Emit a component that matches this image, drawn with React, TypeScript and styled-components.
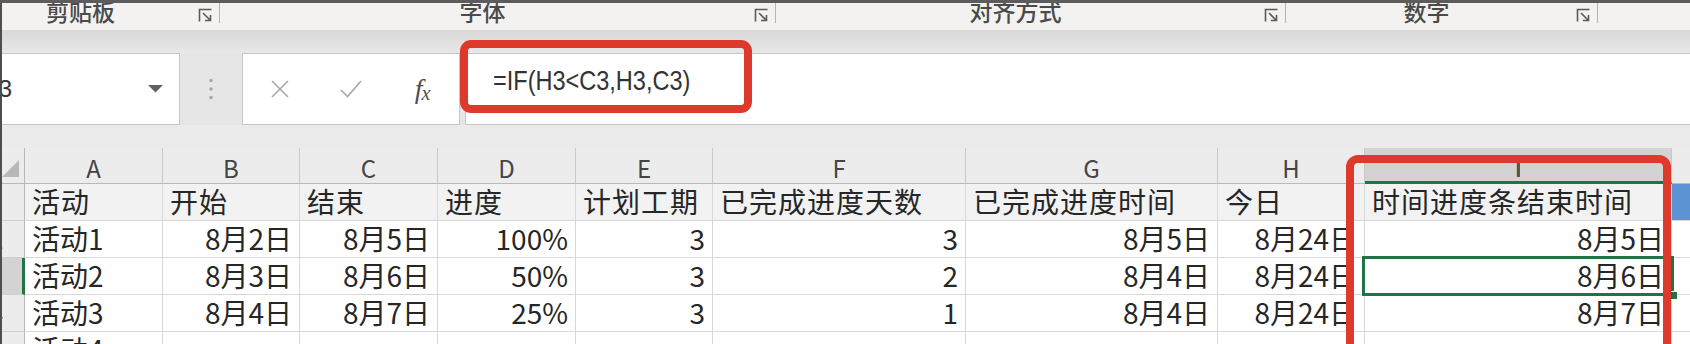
import styled, { createGlobalStyle, css } from 'styled-components';

const GlobalStyle = createGlobalStyle`
  html, body {
    margin: 0;
    padding: 0;
    background: #ffffff;
  }
  body {
    font-family: "Noto Sans CJK SC", "Noto Sans", sans-serif;
  }
`;

const Frame = styled.div`
  position: relative;
  width: 1690px;
  height: 344px;
  overflow: hidden;
  display: flex;
  flex-direction: column;
  background: #e8e8e8;
`;

const TopBand = styled.div`
  flex: none;
  height: 3px;
  background: #5c5c5c;
`;

const Body = styled.div`
  flex: 1;
  min-height: 0;
  display: flex;
  flex-direction: column;
  border-left: 2px solid #4e4e4e;
  overflow: hidden;
`;

/* ribbon group captions */

const Ribbon = styled.div`
  flex: none;
  height: 27px;
  display: flex;
  align-items: flex-start;
  background: #f3f2f1;
`;

const Group = styled.div<{ $width: number; $offset?: number }>`
  flex: none;
  box-sizing: border-box;
  width: ${({ $width }) => $width}px;
  margin-left: ${({ $offset }) => $offset ?? 0}px;
  height: 20px;
  display: flex;
  align-items: flex-start;
  border-right: 1px solid #b4b4b4;
`;

const GroupLabel = styled.div`
  flex: 1;
  margin-top: -3px;
  text-align: center;
  font-size: 23px;
  font-weight: 500;
  line-height: 22px;
  color: #4a4a4a;
`;

const Launcher = styled.div`
  flex: none;
  box-sizing: border-box;
  width: 30px;
  padding: 5px 6px 0 0;
  display: flex;
  justify-content: flex-end;
`;

const RibbonShade = styled.div`
  flex: none;
  height: 23px;
  box-sizing: border-box;
  background: linear-gradient(#d9d9d9, #e8e8e8);
`;

/* formula bar */

const FormulaBar = styled.div`
  flex: none;
  height: 72px;
  display: flex;
  background: #e6e6e6;
`;

const NameBox = styled.div`
  flex: none;
  box-sizing: border-box;
  width: 198px;
  margin-left: -20px;
  padding: 0 16px 0 9px;
  display: flex;
  align-items: center;
  background: #ffffff;
  border: 1px solid #c6c6c6;
  font-family: "Liberation Sans", Arial, sans-serif;
  font-size: 24px;
  color: #333333;
`;

const NameText = styled.span`
  flex: 1;
`;

const DotsSlot = styled.div`
  flex: none;
  width: 62px;
  display: flex;
  align-items: center;
  justify-content: center;
`;

const ButtonsBox = styled.div`
  flex: none;
  box-sizing: border-box;
  width: 218px;
  padding-left: 15px;
  display: flex;
  align-items: center;
  gap: 27px;
  background: #ffffff;
  border: 1px solid #c6c6c6;
`;

const IconSlot = styled.div`
  width: 44px;
  height: 30px;
  display: flex;
  align-items: center;
  justify-content: center;
`;

const Fx = styled.span`
  font-family: "Liberation Serif", "Times New Roman", serif;
  font-style: italic;
  font-size: 28px;
  color: #4f4f4f;
  letter-spacing: -1px;

  & > small {
    font-size: 20px;
    position: relative;
    top: 2px;
  }
`;

const FormulaInput = styled.div`
  flex: 1;
  box-sizing: border-box;
  margin-left: 5px;
  padding: 11px 0 0 27px;
  background: #ffffff;
  border: 1px solid #c6c6c6;
  border-right: none;
`;

const FormulaText = styled.span`
  display: inline-block;
  transform: scaleX(0.84);
  transform-origin: left center;
  font-family: "Liberation Sans", Arial, sans-serif;
  font-size: 28px;
  line-height: 32px;
  color: #333333;
`;

const BarGap = styled.div`
  flex: none;
  height: 23px;
  background: #ebebeb;
`;

/* sheet grid */

const COLS = [43, 138, 137, 138, 138, 137, 253, 252, 147, 307, 100];

const Grid = styled.div`
  flex: none;
  display: grid;
  grid-template-columns: ${COLS.map((c) => `${c}px`).join(' ')};
  grid-template-rows: 36px repeat(5, 37px);
  margin-left: -20px;
  background: #ffffff;
`;

const headBase = css`
  box-sizing: border-box;
  display: flex;
  align-items: center;
  justify-content: center;
  background: #ececec;
  color: #444444;
`;

const CornerCell = styled.div`
  ${headBase};
  align-items: flex-end;
  justify-content: flex-end;
  padding: 0 5px 6px 0;
  border-right: 1px solid #b9b9b9;
  border-bottom: 1px solid #b9b9b9;
`;

const ColHead = styled.div<{ $selected?: boolean }>`
  ${headBase};
  position: relative;
  padding-top: 4px;
  font-size: 24px;
  line-height: 28px;
  border-right: 1px solid #c9c9c9;
  border-bottom: 1px solid #b9b9b9;

  ${({ $selected }) =>
    $selected &&
    css`
      background: #d3d3d3;
      border-bottom: 3px solid #217346;

      &::after {
        content: '';
        position: absolute;
        left: 50%;
        top: 15px;
        width: 2px;
        height: 14px;
        background: #5a5a5a;
      }
    `}
`;

const RowHead = styled.div<{ $selected?: boolean }>`
  ${headBase};
  padding-right: 12px;
  font-size: 22px;
  line-height: 28px;
  color: #6a6a6a;
  border-right: 1px solid #b9b9b9;
  border-bottom: 1px solid #cfcfcf;

  ${({ $selected }) =>
    $selected &&
    css`
      background: #d3d3d3;
      border-right: 3px solid #217346;
    `}
`;

type Tone = 'title' | 'plain' | 'accent';

const DataCell = styled.div<{ $align: 'left' | 'right'; $tone: Tone; $selected?: boolean }>`
  box-sizing: border-box;
  position: relative;
  display: flex;
  align-items: center;
  justify-content: ${({ $align }) => ($align === 'right' ? 'flex-end' : 'flex-start')};
  padding: 0 7px 2px 7px;
  white-space: nowrap;
  font-size: 28px;
  line-height: 34px;
  letter-spacing: ${({ $tone }) => ($tone === 'title' ? '1px' : '0')};
  color: #262626;
  border-right: 1px solid #d8d8d8;
  border-bottom: 1px solid #d8d8d8;
  background: ${({ $tone }) =>
    $tone === 'title' ? '#f2f2f2' : $tone === 'accent' ? '#5b93d5' : '#ffffff'};

  ${({ $selected }) =>
    $selected &&
    css`
      &::after {
        content: '';
        position: absolute;
        left: -3px;
        top: -2px;
        right: -3px;
        bottom: -2px;
        border: 3px solid #217346;
        z-index: 2;
      }
      &::before {
        content: '';
        position: absolute;
        right: -7px;
        bottom: -6px;
        width: 7px;
        height: 7px;
        background: #217346;
        border: 1px solid #ffffff;
        z-index: 3;
      }
    `}
`;

/* red call-outs drawn over the screenshot */

const Callout = styled.div`
  position: absolute;
  box-sizing: border-box;
  border: 8px solid #de3a2b;
  pointer-events: none;
  z-index: 5;
`;

const FormulaCallout = styled(Callout)`
  left: 460px;
  top: 40px;
  width: 292px;
  height: 73px;
  border-radius: 11px;
`;

const ColumnCallout = styled(Callout)`
  left: 1346px;
  top: 155px;
  width: 325px;
  height: 260px;
  border-radius: 12px;
`;

const LauncherIcon = () => (
  <svg width="15" height="15" viewBox="0 0 15 15">
    <path d="M1.5 13.5V1.5H13.5" stroke="#5a5a5a" strokeWidth="1.6" fill="none" />
    <path d="M5 5L12.5 12.5M7 12.5H12.5V7" stroke="#5a5a5a" strokeWidth="1.6" fill="none" />
  </svg>
);

const groups = [
  { label: '剪贴板', width: 248, offset: -30 },
  { label: '字体', width: 556 },
  { label: '对齐方式', width: 510 },
  { label: '数字', width: 312 },
];

const letters = ['A', 'B', 'C', 'D', 'E', 'F', 'G', 'H', 'I', ''];

const rows: string[][] = [
  ['活动', '开始', '结束', '进度', '计划工期', '已完成进度天数', '已完成进度时间', '今日', '时间进度条结束时间', ''],
  ['活动1', '8月2日', '8月5日', '100%', '3', '3', '8月5日', '8月24日', '8月5日', ''],
  ['活动2', '8月3日', '8月6日', '50%', '3', '2', '8月4日', '8月24日', '8月6日', ''],
  ['活动3', '8月4日', '8月7日', '25%', '3', '1', '8月4日', '8月24日', '8月7日', ''],
  ['活动4', '', '', '', '', '', '', '', '', ''],
];

const SELECTED_COL = 8;
const SELECTED_ROW = 2;

export default function App() {
  return (
    <>
      <GlobalStyle />
      <Frame>
        <TopBand />
        <Body>
          <Ribbon>
            {groups.map((g) => (
              <Group key={g.label} $width={g.width} $offset={g.offset}>
                <GroupLabel>{g.label}</GroupLabel>
                <Launcher>
                  <LauncherIcon />
                </Launcher>
              </Group>
            ))}
          </Ribbon>
          <RibbonShade />

          <FormulaBar>
            <NameBox>
              <NameText>I3</NameText>
              <svg width="15" height="8" viewBox="0 0 15 8">
                <polygon points="0,0 15,0 7.5,7.5" fill="#616161" />
              </svg>
            </NameBox>
            <DotsSlot>
              <svg width="4" height="22" viewBox="0 0 4 22">
                <circle cx="2" cy="2.5" r="1.7" fill="#a5a5a5" />
                <circle cx="2" cy="11" r="1.7" fill="#a5a5a5" />
                <circle cx="2" cy="19.5" r="1.7" fill="#a5a5a5" />
              </svg>
            </DotsSlot>
            <ButtonsBox>
              <IconSlot>
                <svg width="20" height="20" viewBox="0 0 20 20">
                  <path d="M2 2L18 18M18 2L2 18" stroke="#a8a8a8" strokeWidth="1.6" />
                </svg>
              </IconSlot>
              <IconSlot>
                <svg width="24" height="20" viewBox="0 0 24 20">
                  <polyline points="2,11 8.5,17.5 22,2" stroke="#a8a8a8" strokeWidth="1.6" fill="none" />
                </svg>
              </IconSlot>
              <IconSlot>
                <Fx>
                  f<small>x</small>
                </Fx>
              </IconSlot>
            </ButtonsBox>
            <FormulaInput>
              <FormulaText>=IF(H3&lt;C3,H3,C3)</FormulaText>
            </FormulaInput>
          </FormulaBar>

          <BarGap />

          <Grid>
            <CornerCell>
              <svg width="17" height="17" viewBox="0 0 17 17">
                <polygon points="17,0 17,17 0,17" fill="#b8b8b8" />
              </svg>
            </CornerCell>
            {letters.map((l, i) => (
              <ColHead key={`h${i}`} $selected={i === SELECTED_COL}>
                {l}
              </ColHead>
            ))}
            {rows.map((row, r) => [
              <RowHead key={`r${r}`} $selected={r === SELECTED_ROW}>
                {r + 1}
              </RowHead>,
              ...row.map((value, c) => (
                <DataCell
                  key={`c${r}-${c}`}
                  $align={r === 0 || c === 0 ? 'left' : 'right'}
                  $tone={r === 0 ? (c === 9 ? 'accent' : 'title') : 'plain'}
                  $selected={r === SELECTED_ROW && c === SELECTED_COL}
                >
                  {value}
                </DataCell>
              )),
            ])}
          </Grid>
        </Body>

        <FormulaCallout />
        <ColumnCallout />
      </Frame>
    </>
  );
}
